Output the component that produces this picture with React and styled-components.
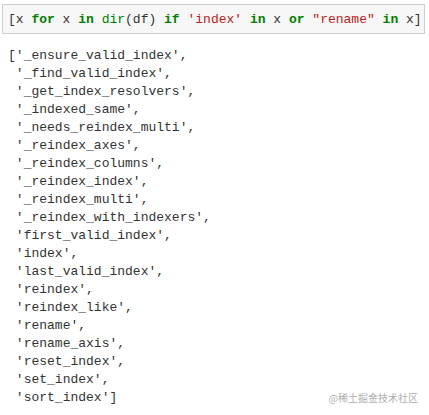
import React from "react";
import styled, { createGlobalStyle } from "styled-components";

const GlobalStyle = createGlobalStyle`
  body {
    margin: 0;
    background: #ffffff;
  }
`;

const items = [
  "_ensure_valid_index",
  "_find_valid_index",
  "_get_index_resolvers",
  "_indexed_same",
  "_needs_reindex_multi",
  "_reindex_axes",
  "_reindex_columns",
  "_reindex_index",
  "_reindex_multi",
  "_reindex_with_indexers",
  "first_valid_index",
  "index",
  "last_valid_index",
  "reindex",
  "reindex_like",
  "rename",
  "rename_axis",
  "reset_index",
  "set_index",
  "sort_index",
];

const App = () => {
  return (
    <Page>
      <GlobalStyle />
      <InputCell>
        <Code>
          {"[x "}
          <Kw>for</Kw>
          {" x "}
          <Kw>in</Kw>
          {" "}
          <Fn>dir</Fn>
          {"(df) "}
          <Kw>if</Kw>
          {" "}
          <Str>'index'</Str>
          {" "}
          <Kw>in</Kw>
          {" x "}
          <Kw>or</Kw>
          {" "}
          <Str>"rename"</Str>
          {" "}
          <Kw>in</Kw>
          {" x]"}
        </Code>
      </InputCell>
      <Output>
        {items.map((name, i) => (
          <Line key={name}>
            {i === 0 ? "[" : " "}'{name}'{i === items.length - 1 ? "]" : ","}
          </Line>
        ))}
      </Output>
      <Watermark>@稀土掘金技术社区</Watermark>
    </Page>
  );
};

const Page = styled.div`
  position: relative;
  width: 429px;
  height: 415px;
  padding: 4px 4px 0 2px;
  box-sizing: border-box;
  font-family: "Liberation Mono", "DejaVu Sans Mono", monospace;
`;

const InputCell = styled.div`
  height: 30px;
  box-sizing: border-box;
  border: 1px solid #cfcfcf;
  background: #f7f7f7;
  padding: 0 5px;
  display: flex;
  align-items: center;
  font-size: 13px;
  color: #333333;
`;

const Code = styled.span`
  white-space: pre;
`;

const Kw = styled.span`
  color: #008000;
  font-weight: bold;
`;

const Fn = styled.span`
  color: #008000;
`;

const Str = styled.span`
  color: #ba2121;
`;

const Output = styled.div`
  padding: 13px 0 0 6px;
  font-size: 13px;
  color: #333333;
`;

const Line = styled.div`
  height: 18px;
  line-height: 18px;
  white-space: pre;
`;

const Watermark = styled.div`
  position: absolute;
  right: 11px;
  bottom: 10px;
  font-family: "Noto Sans CJK SC", sans-serif;
  font-size: 10px;
  color: rgba(150, 150, 150, 0.8);
`;

export default App;
